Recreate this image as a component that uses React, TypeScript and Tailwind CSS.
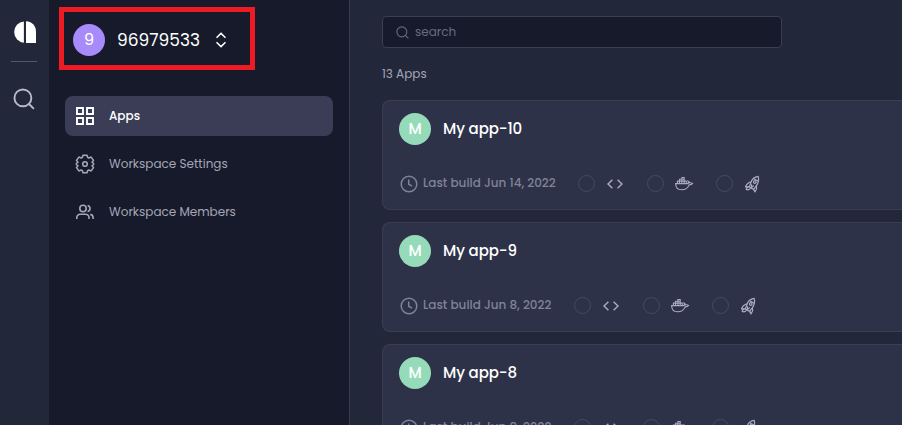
import type { ReactNode } from "react";

const apps = [
  { name: "My app-10", built: "Last build Jun 14, 2022", long: true },
  { name: "My app-9", built: "Last build Jun 8, 2022", long: false },
  { name: "My app-8", built: "Last build Jun 8, 2022", long: false },
];

function SearchIcon({ className, width }: { className: string; width: number }) {
  return (
    <svg viewBox="0 0 24 24" fill="none" stroke="currentColor" strokeWidth={width} className={className}>
      <circle cx="10.8" cy="10.8" r="9.2" />
      <path d="M17.4 17.4 22.8 22.8" />
    </svg>
  );
}

function Logo() {
  return (
    <svg viewBox="0 0 22 22" fill="#fff" className="h-[22px] w-[22px]">
      <path d="M9.900 .4v21.4A10.750 10.750 0 0 1 9.900 .4Z" />
      <path d="M12 .3c5.700 0 10 4.600 10 10.300V21.900H12Z" />
    </svg>
  );
}

function GridIcon() {
  return (
    <svg viewBox="0 0 20 20" fill="none" stroke="currentColor" strokeWidth="1.900" className="h-5 w-5">
      <path d="M2 2h6v6h-6zM12 2h6v6h-6zM2 12h6v6h-6zM12 12h6v6h-6z" />
    </svg>
  );
}

function GearIcon() {
  return (
    <svg viewBox="0 0 20 20" fill="none" stroke="currentColor" strokeWidth="1.600" strokeLinejoin="round" className="h-5 w-5">
      <path d="M8 1.200h4l.6 2.200 1.200.6 2.300-.9 2.400 3.300-1.400 1.900c.6.500 1.600.7 1.600 1.700s-1 1.200-1.600 1.700l1.400 1.900-2.400 3.300-2.300-.9-1.200.6-.6 2.200H8l-.6-2.200-1.200-.6-2.300.9-2.400-3.300 1.400-1.900c-.6-.5-1.600-.7-1.600-1.700s1-1.200 1.600-1.700L1.500 6.400l2.400-3.300 2.300.9 1.200-.6Z" />
      <circle cx="10" cy="10" r="2.300" />
    </svg>
  );
}

function MembersIcon() {
  return (
    <svg viewBox="0 0 20 20" fill="none" stroke="currentColor" strokeWidth="1.600" className="h-5 w-5">
      <circle cx="8" cy="6.500" r="3.200" />
      <path d="M1.800 17v-1.400A3.300 3.300 0 0 1 5.100 12.200h5.600a3.300 3.300 0 0 1 3.300 3.400V17M12.600 3.400a3.200 3.200 0 0 1 0 6.200M15.200 12.400a3.300 3.300 0 0 1 2.900 3.300V17" />
    </svg>
  );
}

function ClockIcon() {
  return (
    <svg viewBox="0 0 18 18" fill="none" stroke="currentColor" strokeWidth="1.500" className="h-[18px] w-[18px] shrink-0">
      <circle cx="9" cy="9" r="7.800" />
      <path d="M8.700 4.500v4.700l3.400 1.900" />
    </svg>
  );
}

function CodeIcon() {
  return (
    <svg viewBox="0 0 20 18" fill="none" stroke="currentColor" strokeWidth="1.400" className="h-[18px] w-5">
      <path d="M7.400 4.700 3 9l4.400 4.300M12.600 4.700 17 9l-4.400 4.300" />
    </svg>
  );
}

function DockerIcon() {
  return (
    <svg viewBox="0 0 20 18" fill="none" stroke="currentColor" strokeWidth="1.100" className="h-[18px] w-5">
      <path d="M1.600 8.600h12.600c.3-1 .2-1.800-.2-2.700 1 .4 1.500 1.200 1.600 2 1.100-.2 2.100 0 3 .5-.7 1.100-2 1.600-3.400 1.500-1.400 3.300-3.800 4.900-7.500 4.900-4 0-6.100-2-6.100-6.200Z" />
      <path d="M3.400 8.400V6.100h8.900v2.300M5.500 8.400V4.300h4.700v4.100M7.900 8.400V2.500h2.300v2M3.400 6.300h8.900" />
    </svg>
  );
}

function RocketIcon() {
  return (
    <svg viewBox="1 0 20 20" fill="none" stroke="currentColor" strokeWidth="1.200" strokeLinejoin="round" className="h-5 w-5">
      <path d="M16.200 2.300c-3.500.5-6.200 2.500-7.300 6.200L7.400 13l4.200 2.400 2.800-3.700c2.100-3 2.700-6 1.800-9.400Z" />
      <path d="M8.900 7.900c-2.300.5-4.100 2-5.400 4.900l3.900-.3M14.500 11.500c.6 2.200.1 4.300-1.500 6.400l-1.400-2.500M11.400 4.500l4.900 2.700M7.400 13c-1.900-.1-3 .7-3.200 2.400 1.700.8 3.300.6 4.700-1.600M9.600 10.300l-.3 3.600 2.400-2.400" />
      <circle cx="12.800" cy="8" r="1.300" />
    </svg>
  );
}

function Stage({ children }: { children: ReactNode }) {
  return (
    <div className="flex w-[69px] items-center pb-px">
      <span className="h-[17px] w-[17px] rounded-full border-[1.5px] border-[#464963]" />
      <span className="ml-[10px] flex text-[#a9abc1]">{children}</span>
    </div>
  );
}

function AppCard({ name, built, long }: { name: string; built: string; long: boolean }) {
  return (
    <article className="h-[110px] shrink-0 rounded-l-lg border border-r-0 border-[#3b3e53] bg-[#2e3248] pl-4 pt-3">
      <div className="flex h-8 items-center">
        <span className="flex h-8 w-8 items-center justify-center rounded-full bg-[#96dbb9] text-[15px] font-medium text-white">M</span>
        <h2 className="ml-3 text-[15px] font-medium tracking-[-0.1px] text-white">{name}</h2>
      </div>
      <div className="mt-[29px] flex h-5 items-center text-[#7f829b]">
        <span className="ml-px flex"><ClockIcon /></span>
        <span className={`ml-[5px] shrink-0 whitespace-nowrap pb-0.5 text-[12px] font-medium leading-5 ${long ? "w-[155px]" : "w-[151px]"}`}>
          {built}
        </span>
        <Stage><CodeIcon /></Stage>
        <Stage><DockerIcon /></Stage>
        <Stage><RocketIcon /></Stage>
      </div>
    </article>
  );
}

function NavItem({ icon, label, active = false }: { icon: ReactNode; label: string; active?: boolean }) {
  return (
    <a className={`flex h-10 items-center gap-[14px] rounded-lg pl-[10px] text-[12px] ${active ? "bg-[#3b3d56] font-medium text-white" : "text-[#a4a6b6]"}`}>
      {icon}
      <span>{label}</span>
    </a>
  );
}

export default function App() {
  return (
    <div className="flex h-[425px] w-full overflow-hidden bg-[#23273a] font-['Poppins','Inter',sans-serif]">
      <aside className="flex w-[49px] shrink-0 flex-col items-start pt-[21px]">
        <span className="ml-[14px]"><Logo /></span>
        <hr className="ml-[11px] mt-[18px] w-[26px] border-[#55576a]" />
        <SearchIcon width={2.1} className="ml-[13px] mt-[26px] h-[22px] w-[22px] text-[#b7b9c8]" />
      </aside>
      <nav className="w-[301px] shrink-0 border-r border-[#3b3e53] bg-[#171a2b] px-4 pt-[7px]">
        <div className="-ml-[6px] flex h-[63px] w-[196px] items-center border-[5px] border-[#ed1c24] pl-[9px] pt-[3px] text-white">
          <span className="flex h-8 w-8 items-center justify-center rounded-full bg-[#a78bfa] text-[16px]">9</span>
          <span className="ml-3 pt-0.5 text-[17px]">96979533</span>
          <svg viewBox="0 0 12 16" fill="none" stroke="currentColor" strokeWidth="1.500" className="ml-[15px] h-4 w-3">
            <path d="m1.500 5.700 4.500-4.300 4.500 4.300M1.500 10.300 6 14.600l4.500-4.300" />
          </svg>
        </div>
        <div className="mt-[26px] flex w-[268px] flex-col gap-2">
          <NavItem active icon={<GridIcon />} label="Apps" />
          <NavItem icon={<GearIcon />} label="Workspace Settings" />
          <NavItem icon={<MembersIcon />} label="Workspace Members" />
        </div>
      </nav>
      <main className="flex min-w-0 flex-1 flex-col pl-8 pt-4">
        <div className="flex h-8 w-[400px] shrink-0 items-center rounded border border-[#3b3e53] bg-[#171a2b] pl-[13px] text-[#676a82]">
          <SearchIcon width={2} className="h-[13px] w-[13px]" />
          <span className="ml-[6px] text-[12px]">search</span>
        </div>
        <p className="mb-4 mt-4 text-[12px] leading-5 text-[#a4a6b6]">13 Apps</p>
        <section className="flex flex-col gap-3">
          {apps.map((app) => <AppCard key={app.name} {...app} />)}
        </section>
      </main>
    </div>
  );
}
